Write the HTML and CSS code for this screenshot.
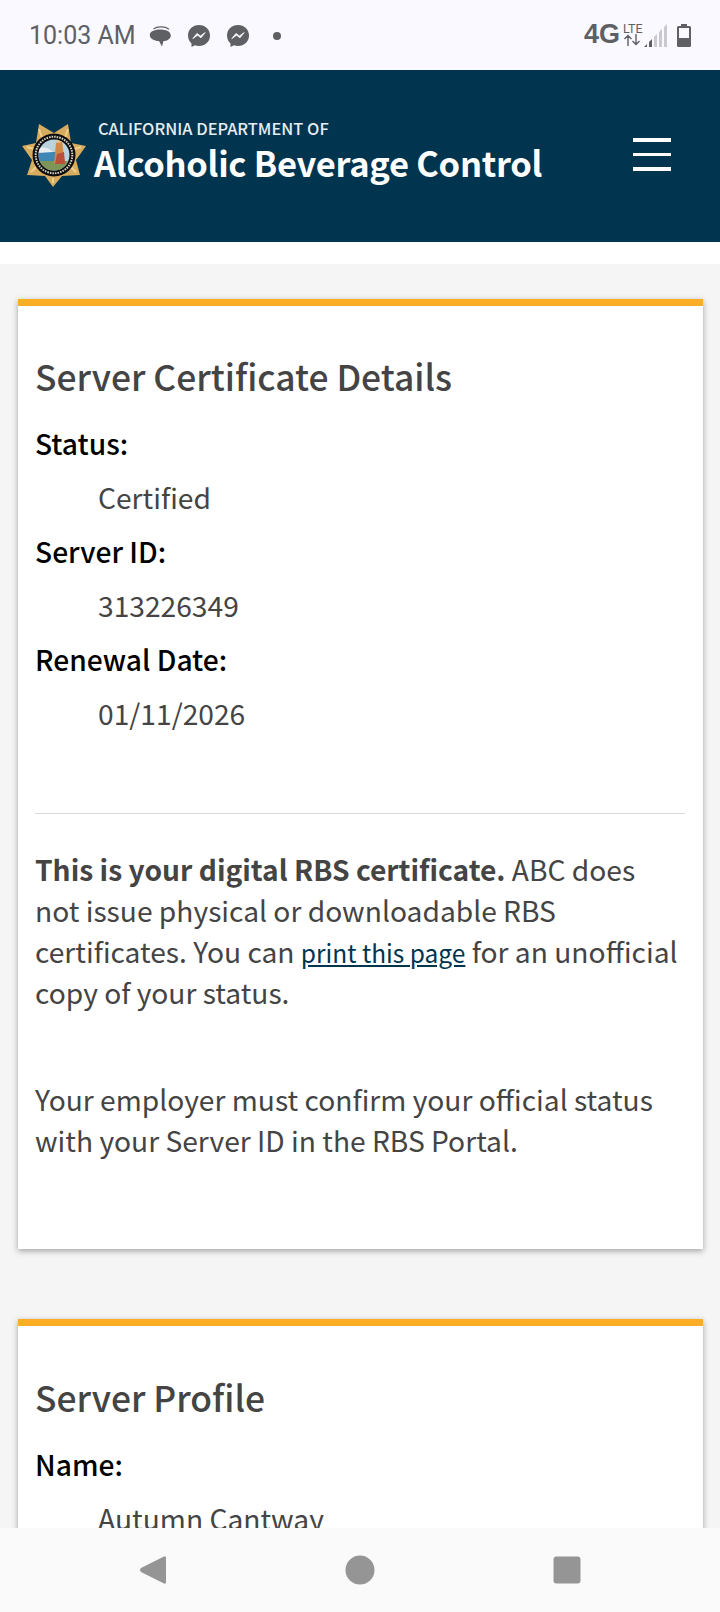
FILE: index.html
```html
<!DOCTYPE html>
<html lang="en">
<head>
    <meta charset="UTF-8">
    <meta name="viewport" content="width=device-width, initial-scale=1.0">
    <title>Server Certificate Details</title>
    <link rel="stylesheet" href="styles.css">
</head>
<body>
    <!-- Android status bar -->
    <div class="status-bar">
        <span class="clock">10:03 AM</span>
        <div class="notif-icons">
            <svg class="notif" viewBox="0 0 24 24" width="24" height="24">
                <path d="M5.500 5 C9 2.200 17 2.200 21 5.200" fill="none" stroke="#5f6064" stroke-width="1.200"/>
                <path d="M1.800 11 C1.800 7.600 6 5.400 12 5.400 C18 5.400 22.800 7.400 22.800 11.500 C22.800 15 19 17 15.500 17 L14 22.500 L11 17 C6 17 1.800 14.600 1.800 11 Z" fill="#5f6064"/>
            </svg>
            <svg class="notif" viewBox="0 0 24 24" width="24" height="24">
                <path d="M12 1 C5.800 1 1 5.500 1 11.600 C1 14.800 2.300 17.500 4.500 19.400 L4.500 23 L8 21.200 C9.200 21.600 10.600 21.900 12 21.900 C18.200 21.900 23 17.400 23 11.400 C23 5.500 18.200 1 12 1 Z" fill="#5f6064"/>
                <path d="M5.800 14.600 L10 9.400 L13.400 12 L18.200 8.600 L14 13.800 L10.600 11.200 Z" fill="#f9f9ff" stroke="#f9f9ff" stroke-width="0.800"/>
            </svg>
            <svg class="notif" viewBox="0 0 24 24" width="24" height="24">
                <path d="M12 1 C5.800 1 1 5.500 1 11.600 C1 14.800 2.300 17.500 4.500 19.400 L4.500 23 L8 21.200 C9.200 21.600 10.600 21.900 12 21.900 C18.200 21.900 23 17.400 23 11.400 C23 5.500 18.200 1 12 1 Z" fill="#5f6064"/>
                <path d="M5.800 14.600 L10 9.400 L13.400 12 L18.200 8.600 L14 13.800 L10.600 11.200 Z" fill="#f9f9ff" stroke="#f9f9ff" stroke-width="0.800"/>
            </svg>
            <span class="notif-dot"></span>
        </div>
        <div class="sys-icons">
            <span class="net">4G</span>
            <div class="lte">
                <span class="lte-label">LTE</span>
                <svg viewBox="0 0 18 12" width="18" height="12">
                    <path d="M5 12 V2 M1.500 5 L5 1.500 L8.500 5 M13 0 V10 M9.500 7 L13 10.500 L16.500 7" fill="none" stroke="#5f6064" stroke-width="1.400"/>
                </svg>
            </div>
            <svg class="signal" viewBox="0 0 24 23" width="24" height="23">
                <path d="M0 23 L3 20 V23 Z" fill="#5f6064"/>
                <path d="M5 18 L8 15 V23 H5 Z" fill="#5f6064"/>
                <path d="M10 13 L13 10 V23 H10 Z" fill="#c9c9cf"/>
                <path d="M15 8 L18 5 V23 H15 Z" fill="#c9c9cf"/>
                <path d="M20 3 L23 0 V23 H20 Z" fill="#c9c9cf"/>
            </svg>
            <svg class="battery" viewBox="0 0 14 23" width="14" height="23">
                <path d="M4 0 H10 V2 H12.500 Q14 2 14 3.500 V21.500 Q14 23 12.500 23 H1.500 Q0 23 0 21.500 V3.500 Q0 2 1.500 2 H4 Z" fill="#5f6064"/>
                <rect x="2" y="4" width="10" height="10" fill="#f9f9ff"/>
            </svg>
        </div>
    </div>

    <!-- Header -->
    <header class="site-header">
        <svg class="seal" viewBox="0 0 66 66" width="66" height="66">
            <defs>
                <clipPath id="seal-scene">
                    <circle cx="33" cy="32" r="15.500"/>
                </clipPath>
            </defs>
            <polygon points="32,64 24,53 6,52 11,37 1,23 15,20 18,1 33,10 47,1 50,20 65,23 55,37 59,52 41,53" fill="#d8ac5e"/>
            <path d="M18 6 L21 15 M47 6 L44 15 M6 24 L13 26 M60 24 L53 26 M10 49 L15 44 M55 49 L50 44 M32 60 L32 55" stroke="#efd08a" stroke-width="2"/>
            <circle cx="33" cy="32" r="21.500" fill="#0c0c10"/>
            <circle cx="33" cy="32" r="18.300" fill="none" stroke="#d5d0bd" stroke-width="2" stroke-dasharray="1.600 1"/>
            <g clip-path="url(#seal-scene)">
                <rect x="17" y="16" width="32" height="32" fill="#b9d3df"/>
                <rect x="17" y="29" width="22" height="9" fill="#3e86b4"/>
                <path d="M17 26 Q24 22 32 29 L17 30 Z" fill="#e8eef0"/>
                <rect x="17" y="38" width="32" height="10" fill="#7d9658"/>
                <path d="M35 20 L41 18 L44 41 L33 41 Z" fill="#d08a45"/>
                <path d="M36 31 L43 29 L44 41 L34 41 Z" fill="#b8503a"/>
                <circle cx="38" cy="17.500" r="2.500" fill="#e5bd80"/>
            </g>
        </svg>
        <div class="brand">
            <span class="brand-top">CALIFORNIA DEPARTMENT OF</span>
            <span class="brand-name">Alcoholic Beverage Control</span>
        </div>
        <div class="hamburger">
            <span class="bar"></span>
            <span class="bar bar-thin"></span>
            <span class="bar"></span>
        </div>
    </header>

    <main class="content">
        <section class="card card-details">
            <h2>Server Certificate Details</h2>
            <dl>
                <dt>Status:</dt>
                <dd>Certified</dd>
                <dt>Server ID:</dt>
                <dd>313226349</dd>
                <dt>Renewal Date:</dt>
                <dd>01/11/2026</dd>
            </dl>
            <hr>
            <p><strong>This is your digital RBS certificate.</strong> ABC does not issue physical or downloadable RBS certificates. You can <a href="#">print this page</a> for an unofficial copy of your status.</p>
            <p>Your employer must confirm your official status with your Server ID in the RBS Portal.</p>
        </section>

        <section class="card">
            <h2>Server Profile</h2>
            <dl>
                <dt>Name:</dt>
                <dd>Autumn Cantway</dd>
            </dl>
        </section>
    </main>

    <!-- Android nav bar -->
    <nav class="nav-bar">
        <svg viewBox="0 0 28 30" width="28" height="30">
            <path d="M25 1.500 Q27 0.500 27 3 V27 Q27 29.500 25 28.500 L2 17 Q0 15 2 13 Z" fill="#959595"/>
        </svg>
        <svg viewBox="0 0 30 30" width="30" height="30">
            <circle cx="15" cy="15" r="14.500" fill="#959595"/>
        </svg>
        <svg viewBox="0 0 28 28" width="28" height="28">
            <rect x="0.500" y="0.500" width="27" height="27" rx="3" fill="#959595"/>
        </svg>
    </nav>
</body>
</html>
```

FILE: styles.css
```css
/* CSS */
html, body {
    margin: 0;
    padding: 0;
}

body {
    position: relative;
    width: 720px;
    height: 1612px;
    overflow: hidden;
    background-color: #fff;
    font-family: "Noto Sans CJK SC", "Open Sans", sans-serif;
    color: #444;
}

.status-bar {
    height: 70px;
    background-color: #f9f9ff;
    display: flex;
    align-items: center;
    padding: 0 29px;
    box-sizing: border-box;
    color: #5f6064;
}

.clock {
    font-family: Roboto, sans-serif;
    font-size: 25px;
    padding-top: 1px;
}

.notif-icons {
    display: flex;
    align-items: center;
    gap: 15px;
    margin-left: 12px;
    padding-top: 1px;
}

.notif-dot {
    width: 8px;
    height: 8px;
    margin-left: 8px;
    border-radius: 50%;
    background-color: #5f6064;
}

.sys-icons {
    margin-left: auto;
    display: flex;
    align-items: flex-start;
    height: 23px;
}

.net {
    font-family: "Liberation Sans", sans-serif;
    font-weight: bold;
    font-size: 27px;
    line-height: 20px;
}

.lte {
    display: flex;
    flex-direction: column;
    margin-left: 3px;
    width: 21px;
}

.lte-label {
    font-family: Roboto, sans-serif;
    font-size: 12.500px;
    line-height: 10px;
}

.signal {
    margin-left: 0;
}

.battery {
    margin-left: 9px;
}

.site-header {
    height: 172px;
    background-color: #00344f;
    display: flex;
    align-items: center;
    box-sizing: border-box;
    padding: 0 49px 0 21px;
    color: #fff;
}

.seal {
    flex-shrink: 0;
    margin-top: -1px;
}

.brand {
    display: flex;
    flex-direction: column;
    margin-left: 7px;
    margin-top: -4px;
}

.brand-top {
    font-size: 16.400px;
    font-weight: 500;
    line-height: 16px;
    margin-left: 4px;
    color: #e6edf1;
}

.brand-name {
    font-size: 34.500px;
    font-weight: 700;
    line-height: 52px;
    letter-spacing: -0.300px;
}

.hamburger {
    margin-left: auto;
    margin-top: -3px;
    width: 38px;
    display: flex;
    flex-direction: column;
    gap: 11px;
}

.bar {
    height: 4px;
    background-color: #fff;
}

.bar-thin {
    height: 3px;
}

.content {
    margin-top: 22px;
    height: 1348px;
    box-sizing: border-box;
    background-color: #f5f5f5;
    padding: 35px 17px 0 18px;
    display: flex;
    flex-direction: column;
    gap: 70px;
}

.card {
    background-color: #fff;
    border-top: 7px solid #fbad26;
    box-shadow: 0 2px 6px rgba(0, 0, 0, 0.35);
    padding: 49px 18px 0 17px;
}

.card-details {
    height: 950px;
    box-sizing: border-box;
    padding-top: 48px;
}

h2 {
    margin: 0;
    font-size: 35.400px;
    font-weight: 500;
    line-height: 44px;
    color: #444;
}

dl {
    margin: 18px 0 0;
    font-size: 28.200px;
    line-height: 54px;
}

dt {
    font-weight: 500;
    color: #000;
}

dd {
    margin: 0 0 0 63px;
}

hr {
    margin: 73px 0 0;
    border: 0;
    border-top: 1px solid #d8d8d8;
}

p {
    margin: 34px 0 0;
    font-size: 28.200px;
    line-height: 41px;
}

p + p {
    margin-top: 66px;
}

strong {
    font-weight: 700;
}

a {
    font-size: 24.500px;
    line-height: 1;
    color: #00344f;
}

.nav-bar {
    position: absolute;
    left: 0;
    right: 0;
    bottom: 0;
    height: 84px;
    background-color: #fafafa;
    display: flex;
    justify-content: space-between;
    align-items: center;
    box-sizing: border-box;
    padding: 0 139px;
}
```
